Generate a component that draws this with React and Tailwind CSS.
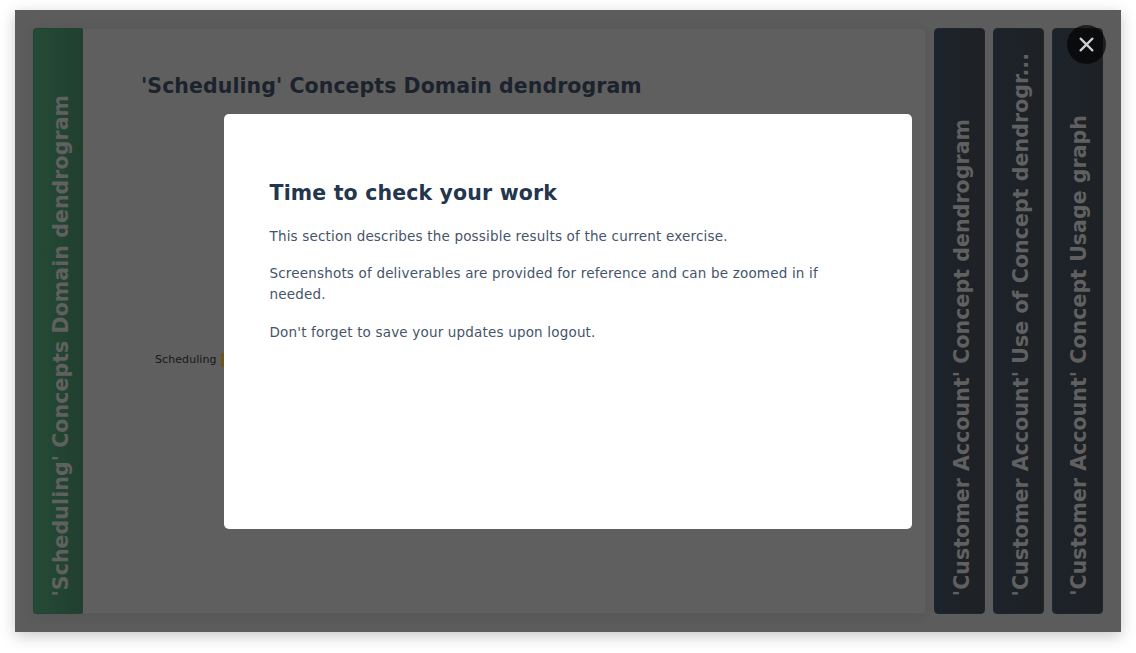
import React from "react";

const graphTabs = [
  { label: "'Customer Account' Concept dendrogram", spacing: "tracking-[0.07px]" },
  { label: "'Customer Account' Use of Concept dendrogr...", spacing: "tracking-[0.08px]" },
  { label: "'Customer Account' Concept Usage graph", spacing: "tracking-[0.05px]" },
];

function VerticalLabel({ children, className }) {
  return (
    <span
      className={`rotate-180 [writing-mode:vertical-rl] whitespace-nowrap text-[20.5px] leading-[26px] font-bold text-[#606060] ${className}`}
    >
      {children}
    </span>
  );
}

export default function App() {
  return (
    <div className="h-[653px] w-[1136px] overflow-hidden bg-white pt-[10px] pl-[15px] font-['DejaVu_Sans',sans-serif]">
      <main className="relative flex h-[622px] w-[1106px] bg-[#5c5c5c] pt-[18px] pl-[18px] shadow-[0_4px_14px_rgba(0,0,0,0.22)]">
        <section className="flex h-[586px] w-[893px] rounded-[4px] bg-[#5f5f5f] shadow-[0_2px_12px_rgba(0,0,0,0.08)] inset-ring inset-ring-[#5a5a5a]">
          <div className="flex w-[50px] items-end rounded-[4px] rounded-r-[2px] border border-r-0 border-[#224333] bg-linear-to-r from-[#244b36] to-[#213f2f] pb-[17px] pl-[14px]">
            <VerticalLabel className="tracking-[0.08px]">'Scheduling' Concepts Domain dendrogram</VerticalLabel>
          </div>
          <div className="pt-[45px] pl-[58px]">
            <h2 className="text-[20.5px] leading-[26px] font-bold tracking-[0.06px] whitespace-nowrap text-[#1c232d]">
              'Scheduling' Concepts Domain dendrogram
            </h2>
            <div className="mt-[253px] ml-[14px] flex items-center gap-[4px]">
              <span className="text-[11px] leading-[16px] tracking-[0.08px] text-[#181818]">Scheduling</span>
              <span className="h-[14px] w-[8px] bg-[#73551a]" />
            </div>
          </div>
        </section>
        <nav className="ml-[8.3px] flex h-[586px] gap-[8px]">
          {graphTabs.map((tab) => (
            <div
              key={tab.label}
              className="flex w-[50.75px] items-end rounded-[4px] border border-[#20262d] bg-linear-to-r from-[#1d232b] to-[#1e2124] pb-[17px] pl-[13.5px]"
            >
              <VerticalLabel className={tab.spacing}>{tab.label}</VerticalLabel>
            </div>
          ))}
        </nav>
        <article
          role="dialog"
          className="absolute top-[103.5px] left-[208.5px] h-[415px] w-[688.5px] rounded-[5px] bg-white pt-[66px] pl-[46px] text-[#45546a]"
        >
          <h1 className="text-[20.5px] leading-[26px] font-bold tracking-[0.15px] whitespace-nowrap text-[#24364e]">
            Time to check your work
          </h1>
          <div className="text-[13.5px] leading-[21px] tracking-[0.18px] whitespace-nowrap">
            <p className="mt-[20px]">This section describes the possible results of the current exercise.</p>
            <p className="mt-[16px]">
              Screenshots of deliverables are provided for reference and can be zoomed in if
              <br />
              needed.
            </p>
            <p className="mt-[17px]">Don't forget to save your updates upon logout.</p>
          </div>
        </article>
        <button
          aria-label="Close"
          className="absolute top-[15px] left-[1052px] flex size-[39px] items-center justify-center rounded-full bg-black/65"
        >
          <svg
            viewBox="0 0 15 15"
            className="size-[15px]"
            fill="none"
            stroke="#cfcfcf"
            strokeWidth="2.2"
            strokeLinecap="round"
          >
            <path d="M1.6 1.6 13.4 13.4M13.4 1.6 1.6 13.4" />
          </svg>
        </button>
      </main>
    </div>
  );
}
